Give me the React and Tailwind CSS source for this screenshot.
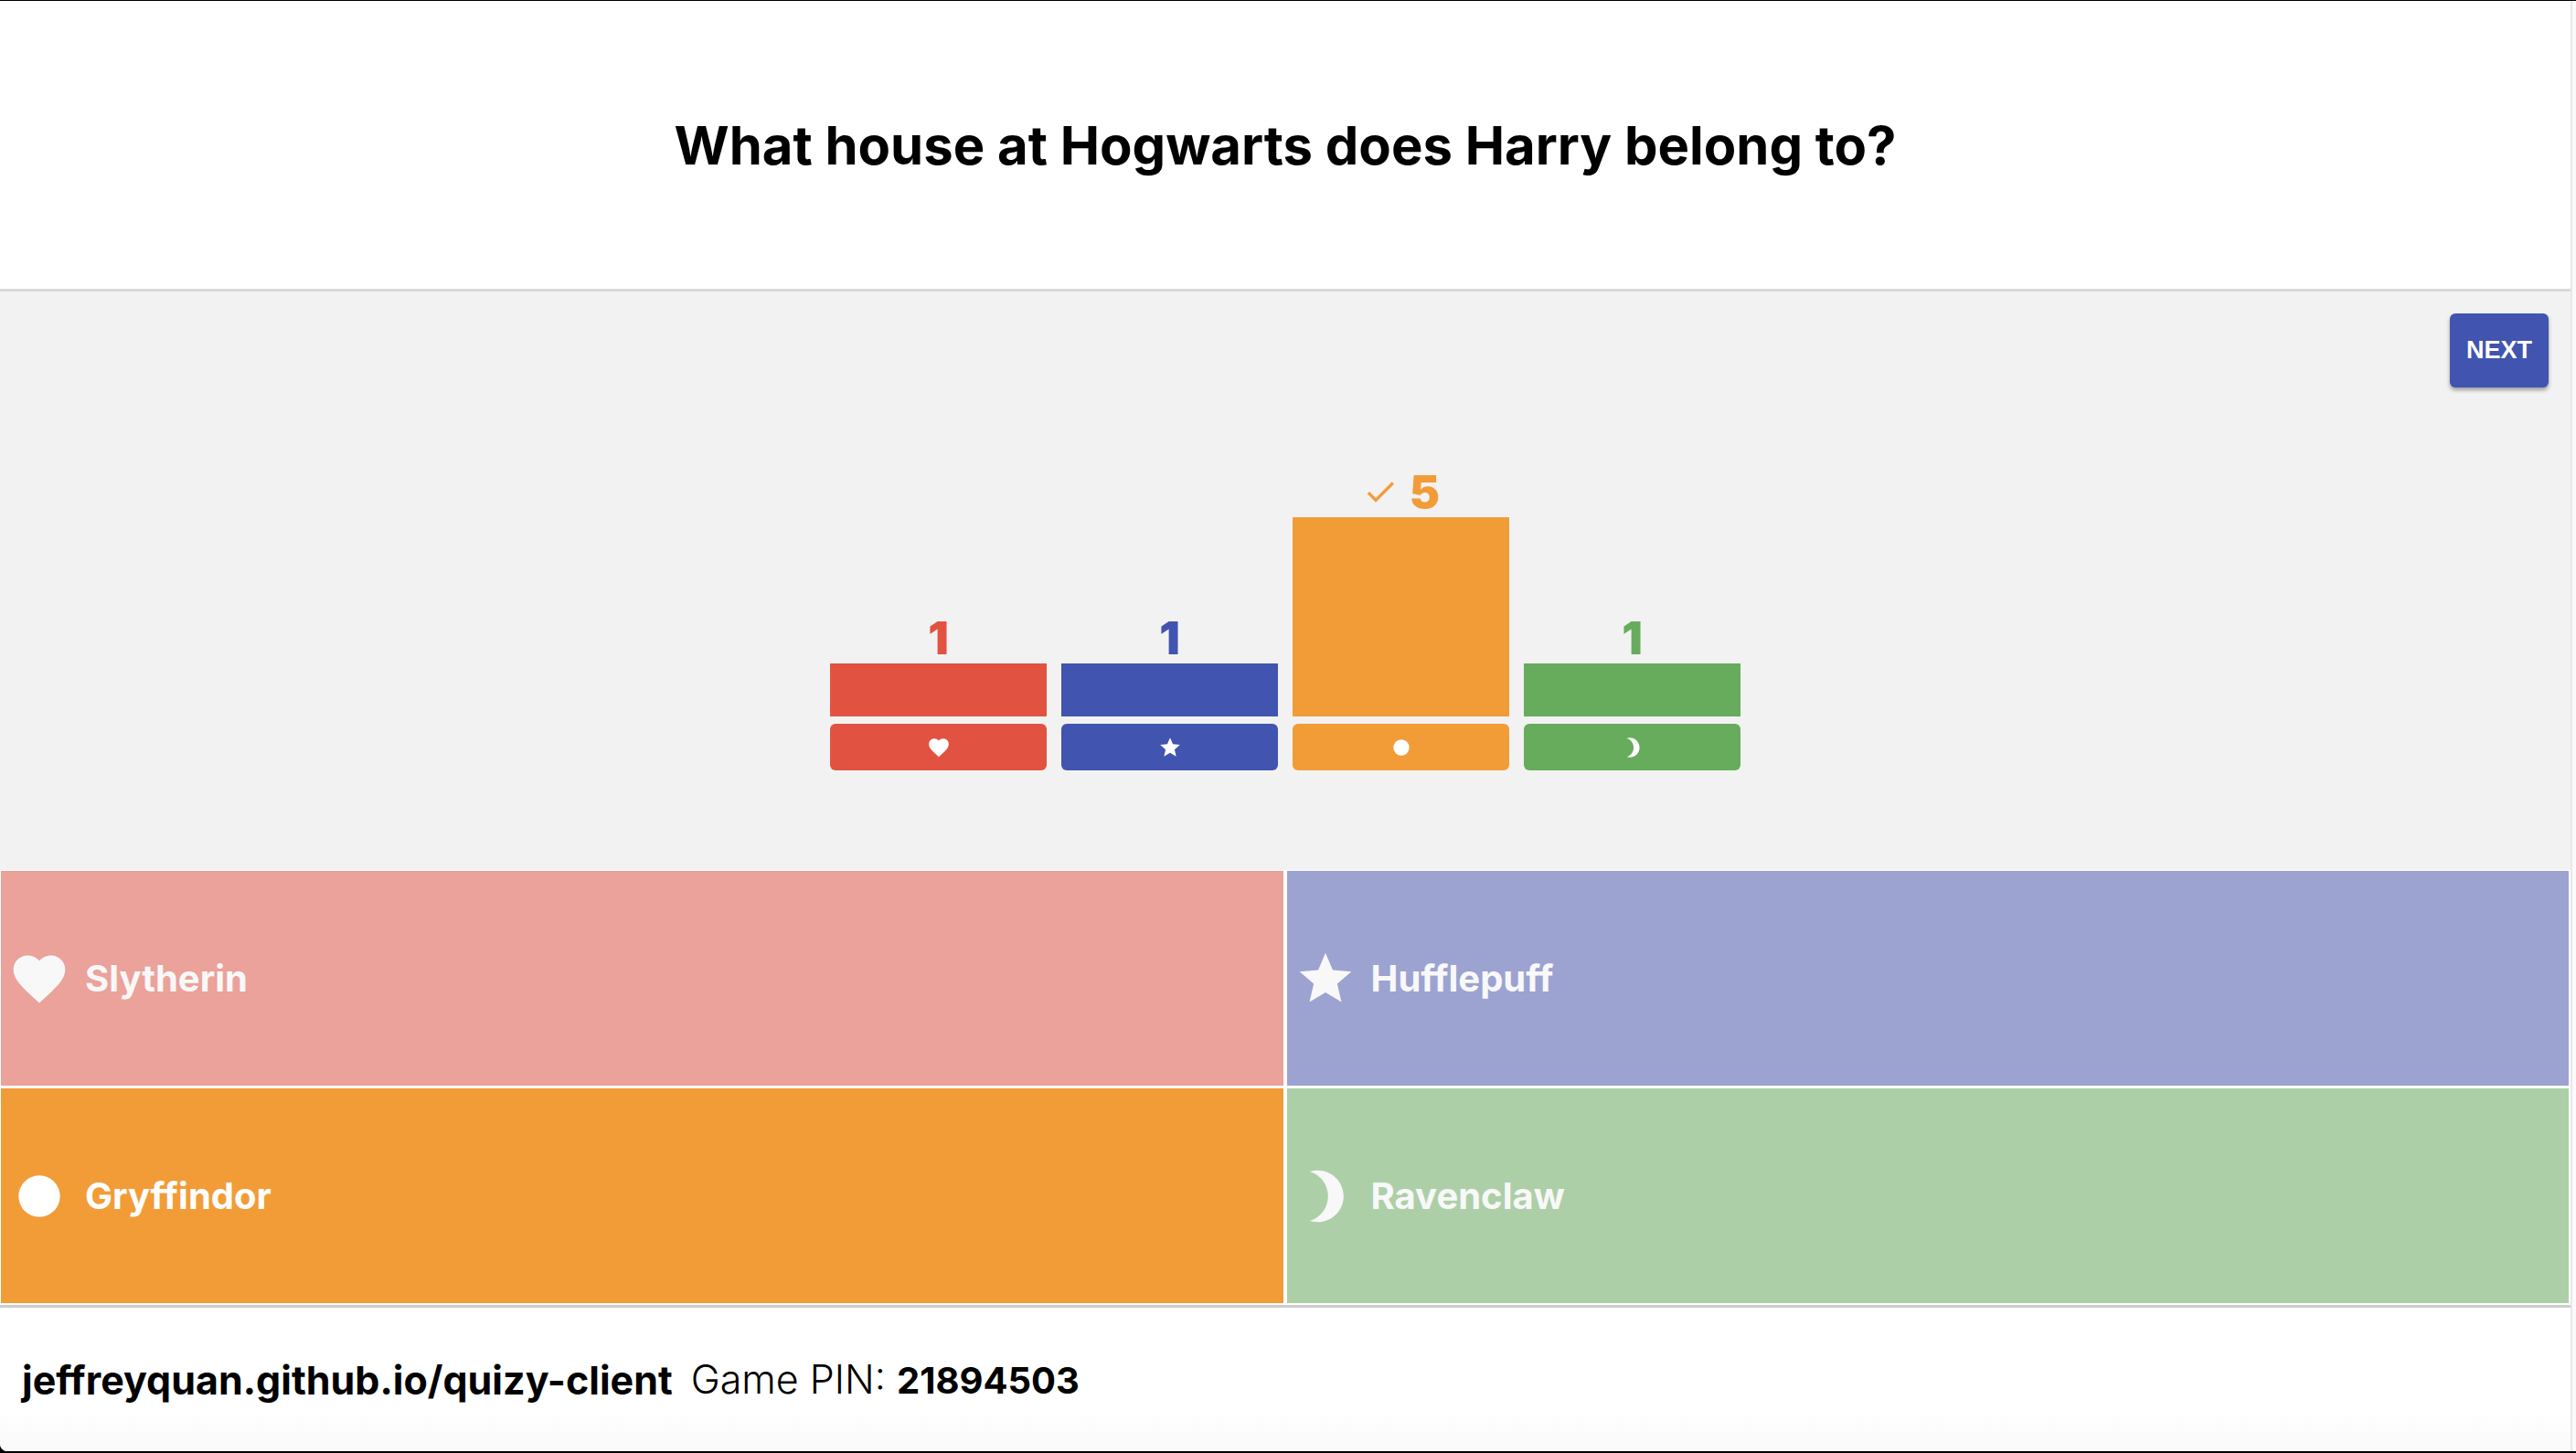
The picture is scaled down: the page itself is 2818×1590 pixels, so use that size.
const ICONS = {
  heart:
    "M12 21.35l-1.45-1.32C5.4 15.36 2 12.28 2 8.5 2 5.42 4.42 3 7.5 3c1.74 0 3.41.81 4.5 2.09C13.09 3.81 14.76 3 16.5 3 19.58 3 22 5.42 22 8.5c0 3.78-3.4 6.86-8.55 11.54L12 21.35z",
  star: "M12 17.27L18.18 21l-1.64-7.03L22 9.24l-7.19-.61L12 2 9.19 8.63 2 9.24l5.46 4.73L5.82 21z",
  circle: "M12 4a8 8 0 1 0 0 16a8 8 0 1 0 0-16z",
  moon: "M9 2c-1.05 0-2.05.16-3 .46 4.06 1.27 7 5.06 7 9.54s-2.94 8.27-7 9.54c.95.3 1.95.46 3 .46 5.52 0 10-4.48 10-10S14.52 2 9 2z",
  check: "M9 16.17L4.83 12l-1.42 1.41L9 19 21 7l-1.41-1.41z",
};

const ANSWERS = [
  { label: "Slytherin", icon: "heart", count: 1, bg: "bg-[#e25241]", tile: "bg-[#eaa29a] text-[#f8f8f8]", text: "text-[#e25241]", bar: "h-[58px]" },
  { label: "Hufflepuff", icon: "star", count: 1, bg: "bg-[#4154af]", tile: "bg-[#9ca3d1] text-[#f8f8f8]", text: "text-[#4154af]", bar: "h-[58px]" },
  { label: "Gryffindor", icon: "circle", count: 5, bg: "bg-[#f29c38]", tile: "bg-[#f29c38] text-white", text: "text-[#f29c38]", bar: "h-[218px]", correct: true },
  { label: "Ravenclaw", icon: "moon", count: 1, bg: "bg-[#67ac5c]", tile: "bg-[#adcfa8] text-[#f8f8f8]", text: "text-[#67ac5c]", bar: "h-[58px]" },
];

function Icon({ name, className }) {
  return (
    <svg viewBox="0 0 24 24" fill="currentColor" aria-hidden="true" className={className}>
      <path d={ICONS[name]} />
    </svg>
  );
}

function ResultBar({ answer }) {
  return (
    <li className="flex w-[237px] flex-col">
      <div className={`flex items-center justify-center gap-3 ${answer.text}`}>
        {answer.correct && <Icon name="check" className="size-10" />}
        <span className="text-[50px] leading-[56px] font-black">{answer.count}</span>
      </div>
      <div className={`${answer.bar} ${answer.bg}`} />
      <div className={`mt-2 flex h-[51px] items-center justify-center rounded-md text-white ${answer.bg}`}>
        <Icon name={answer.icon} className="size-[26px]" />
      </div>
    </li>
  );
}

function AnswerTile({ answer }) {
  return (
    <li className={`flex min-h-[235px] items-center gap-4 px-2 ${answer.tile}`}>
      <Icon name={answer.icon} className="size-[68px]" />
      <span className="text-[40px] leading-[48px] font-bold">{answer.label}</span>
    </li>
  );
}

export default function App() {
  return (
    <div className="flex min-h-screen border-t border-b-2 border-black bg-black font-['Inter',sans-serif]">
      <div className="flex flex-1 flex-col overflow-hidden rounded-bl-lg bg-white text-black">
        <header className="flex h-[20vh] items-center justify-center border-b-3 border-[#d9d9d9]">
          <h1 className="text-[58px] leading-[64px] font-bold">What house at Hogwarts does Harry belong to?</h1>
        </header>

        <main className="flex flex-1 flex-col">
          <section className="flex flex-1 flex-col justify-between bg-[#f2f2f2] pt-6 pb-[109px]">
            <button
              type="button"
              className="mr-6 h-[81px] w-[108px] self-end rounded-md bg-[#4154af] font-['Liberation_Sans',sans-serif] text-[27px] font-bold text-white shadow-[0_3px_4px_rgba(0,0,0,0.35)]"
            >
              NEXT
            </button>
            <ul className="flex items-end justify-center gap-4">
              {ANSWERS.map((answer) => (
                <ResultBar key={answer.label} answer={answer} />
              ))}
            </ul>
          </section>
          <ul className="grid grid-cols-2 gap-x-1 gap-y-[3px] bg-white pt-px pr-0.5 pb-0.5 pl-px">
            {ANSWERS.map((answer) => (
              <AnswerTile key={answer.label} answer={answer} />
            ))}
          </ul>
        </main>

        <footer className="flex h-40 items-center gap-5 border-t-3 border-[#cccccc] bg-linear-to-b from-white from-70% to-[#fafafa] px-6 text-[43px] leading-[48px]">
          <strong className="font-bold">jeffreyquan.github.io/quizy-client</strong>
          <span className="font-light">
            Game PIN: <strong className="text-[40px] font-bold">21894503</strong>
          </span>
        </footer>
      </div>
      <div className="w-1.5 border-l-2 border-[#e8e8e8] bg-[#fafafa]" />
    </div>
  );
}
